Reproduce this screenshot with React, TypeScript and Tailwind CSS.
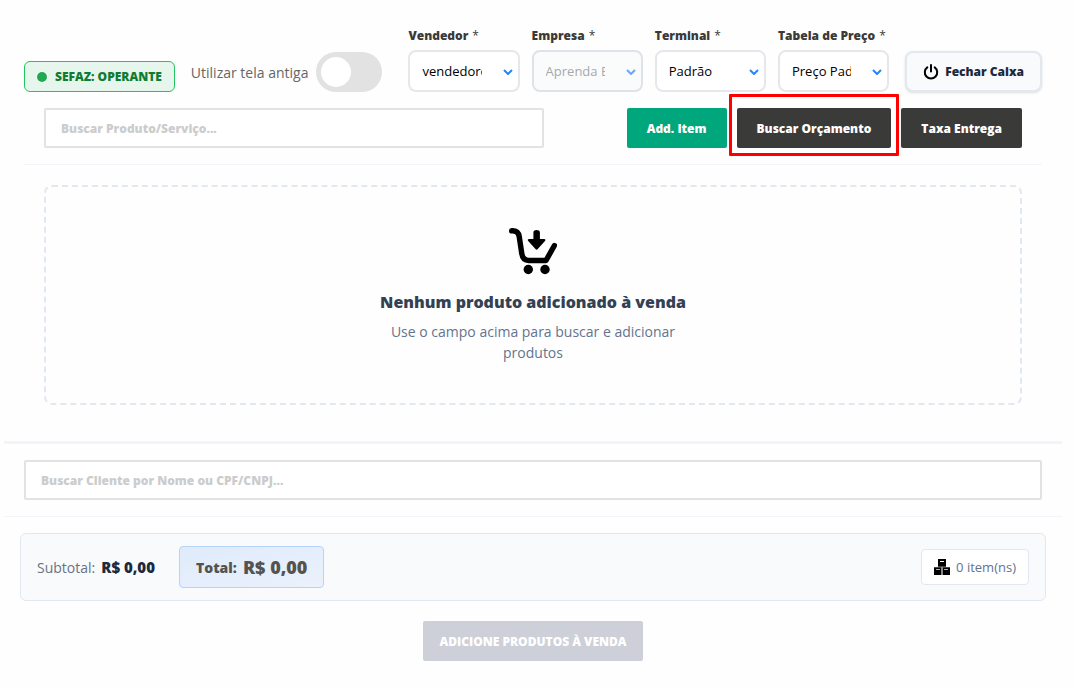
import React from "react";

type SelectFieldProps = {
  id: string;
  label: string;
  value: string;
  disabled?: boolean;
};

function SelectField({ id, label, value, disabled }: SelectFieldProps) {
  return (
    <div className="flex min-w-0 flex-col gap-1.5">
      <label htmlFor={id} className="whitespace-nowrap text-[12px] leading-4 font-extrabold text-[#3a3a38]">
        {label}
        <span className="ml-1 font-normal">*</span>
      </label>
      <div className={disabled ? "relative opacity-70" : "relative"}>
        <select
          id={id}
          disabled={disabled}
          className="h-[42px] w-full appearance-none rounded-lg border-2 border-gray-200 bg-white pt-0.5 pr-9 pl-3 text-[13px] text-black disabled:border-[#d2d8e0] disabled:bg-gray-50 disabled:text-[#7f858e] disabled:opacity-100"
        >
          <option>{value}</option>
        </select>
        <svg
          viewBox="0 0 10 6"
          className="pointer-events-none absolute top-[19px] right-[7px] h-1.5 w-2.5"
          fill="none"
          stroke="#2684ff"
          strokeWidth="2"
          aria-hidden="true"
        >
          <path d="M1 1l4 4 4-4" />
        </svg>
      </div>
    </div>
  );
}

function PowerIcon() {
  return (
    <svg viewBox="0 0 16 16" className="size-4" fill="none" stroke="#000" strokeWidth="2" strokeLinecap="round" aria-hidden="true">
      <path d="M8 1v6.500M4.300 3.400a6.200 6.200 0 1 0 7.400 0" />
    </svg>
  );
}

function CartIcon() {
  return (
    <svg viewBox="0 0 48 48" className="size-12" aria-hidden="true">
      <g fill="none" stroke="#000" strokeWidth="5.4" strokeLinecap="round" strokeLinejoin="round">
        <path d="M2.700 2.800c4.700 -.2 6.900 1.700 7.500 5.700l2.500 16.500c.6 5 3 7.500 7 7.500H37L45.400 17.500" />
      </g>
      <circle cx="19.300" cy="41.500" r="4.700" />
      <circle cx="36" cy="41.500" r="4.700" />
      <path d="M24.400 4.400c0-3.200 6.500-3.200 6.500 0V11h4.200c1.300 0 1.700 1 .9 1.900l-7.500 8.300c-.5.6-1.300.6-1.800 0l-7.500-8.300c-.8-.9-.4-1.900.9-1.900h4.300z" />
    </svg>
  );
}

function BoxesIcon() {
  return (
    <svg viewBox="0 0 16 16" className="size-4" aria-hidden="true">
      <path d="M4 0h8v7H4zM0 9h7v7H0zM9 9h7v7H9z" />
      <path d="M0 8h7v1H0zM9 8h7v1H9zM4 7h8v1H4z" fill="#444" />
      <path d="M7 8h2v8H7z" fill="#8a8a8a" />
      <path d="M6 2h4v1H6z" fill="#fff" />
      <path d="M2 10h4v1H2zM10 10h4v1h-4z" fill="#aaa" />
    </svg>
  );
}

export default function App() {
  return (
    <div className="min-h-screen bg-[#fefefe] pt-7 pr-3 pb-7 pl-1 font-['Open_Sans',sans-serif] text-[#3a3a38]">
      <header className="px-5">
        <div className="flex items-end gap-4">
          <div className="flex h-[31px] shrink-0 items-center gap-2 rounded-md border border-[#22c55e] bg-[#e6f6ec] px-3">
            <span className="size-2.5 rounded-full bg-[#22a852] ring-1 ring-white/60" />
            <span className="text-[12px] font-extrabold text-[#0f7d30]">SEFAZ: OPERANTE</span>
          </div>
          <label className="mr-2.5 flex shrink-0 items-center gap-2 text-[14px] text-[#666]">
            Utilizar tela antiga
            <input type="checkbox" role="switch" className="peer sr-only" />
            <span className="flex h-10 w-[66px] items-center rounded-full bg-[#e2e2e2] px-[5px] peer-checked:justify-end peer-checked:bg-[#00a77d]">
              <span className="size-[30px] rounded-full bg-white" />
            </span>
          </label>
          <div className="grid min-w-0 flex-1 grid-cols-4 gap-3">
            <SelectField id="vendedor" label="Vendedor" value="vendedoronline" />
            <SelectField id="empresa" label="Empresa" value="Aprenda ERP" disabled />
            <SelectField id="terminal" label="Terminal" value="Padrão" />
            <SelectField id="tabela" label="Tabela de Preço" value="Preço Padrão" />
          </div>
          <button
            type="button"
            className="flex h-[41px] shrink-0 items-center gap-1.5 rounded-lg border-2 border-slate-200 bg-slate-50 px-4 text-[12px] font-extrabold text-slate-800 shadow-sm"
          >
            <PowerIcon />
            Fechar Caixa
          </button>
        </div>

        <div className="flex items-center justify-between border-b border-slate-100 px-5 py-4">
          <input
            type="text"
            aria-label="Buscar Produto/Serviço"
            placeholder="Buscar Produto/Serviço..."
            className="h-10 w-[500px] rounded-xs border-2 border-[#e2e2e2] bg-white px-[15px] text-[12px] font-extrabold placeholder:text-[#ccc]"
          />
          <div className="flex gap-2.5">
            <button type="button" className="h-10 rounded-xs bg-[#00a77d] px-5 pt-0.5 text-[12px] font-extrabold text-white">
              Add. Item
            </button>
            <div className="relative">
              <button type="button" className="h-10 rounded-xs bg-[#3a3a38] px-5 pt-0.5 text-[12px] font-extrabold text-white">
                Buscar Orçamento
              </button>
              <span className="pointer-events-none absolute -top-3.5 -right-2 -bottom-2 -left-2 rounded-[1px] border-3 border-[#ff0000]" />
            </div>
            <button type="button" className="h-10 rounded-xs bg-[#3a3a38] px-5 pt-0.5 text-[12px] font-extrabold text-white">
              Taxa Entrega
            </button>
          </div>
        </div>
      </header>

      <main>
        <section className="px-10 pt-5 pb-9">
          <div className="flex h-[220px] flex-col items-center rounded-lg border-2 border-dashed border-slate-200 px-5 pt-[41px]">
            <CartIcon />
            <h2 className="mt-[15px] text-[16px] leading-[22px] font-extrabold text-[#334155]">Nenhum produto adicionado à venda</h2>
            <p className="mt-2 w-[300px] text-center text-[14px] leading-[21px] text-slate-500">
              Use o campo acima para buscar e adicionar produtos
            </p>
          </div>
        </section>

        <section className="border-t-3 border-b border-slate-100 px-5 py-4">
          <input
            type="text"
            aria-label="Buscar Cliente"
            placeholder="Buscar Cliente por Nome ou CPF/CNPJ..."
            className="h-10 w-full rounded-xs border-2 border-[#e2e2e2] bg-white px-[15px] text-[12px] font-extrabold placeholder:text-[#ccc]"
          />
        </section>

        <section className="px-4 pt-4">
          <div className="flex h-[68px] items-center justify-between rounded-md border border-slate-200 bg-slate-50 px-4">
            <div className="flex items-center gap-6">
              <div className="flex items-center gap-1.5 text-[14px]">
                <span className="text-gray-500">Subtotal:</span>
                <strong className="text-[15px] font-extrabold text-slate-800">R$ 0,00</strong>
              </div>
              <div className="flex h-[42px] items-center gap-1.5 rounded-sm border border-[#b6d4fb] bg-linear-to-br from-[#dfebfb] to-[#ebf1fc] px-4 font-extrabold text-[#55534e]">
                <span className="text-[14px]">Total:</span>
                <span className="text-[18px]">R$ 0,00</span>
              </div>
            </div>
            <div className="flex h-9 items-center gap-1.5 rounded-sm border border-slate-200 bg-white px-3 text-[13px] text-slate-500">
              <BoxesIcon />
              <span className="pt-0.5">0 item(ns)</span>
            </div>
          </div>
          <div className="flex justify-center pt-5">
            <button type="button" disabled className="h-10 rounded-xs bg-[#cdd0d8] px-4 pt-0.5 text-[12px] font-extrabold text-white">
              ADICIONE PRODUTOS À VENDA
            </button>
          </div>
        </section>
      </main>
    </div>
  );
}
